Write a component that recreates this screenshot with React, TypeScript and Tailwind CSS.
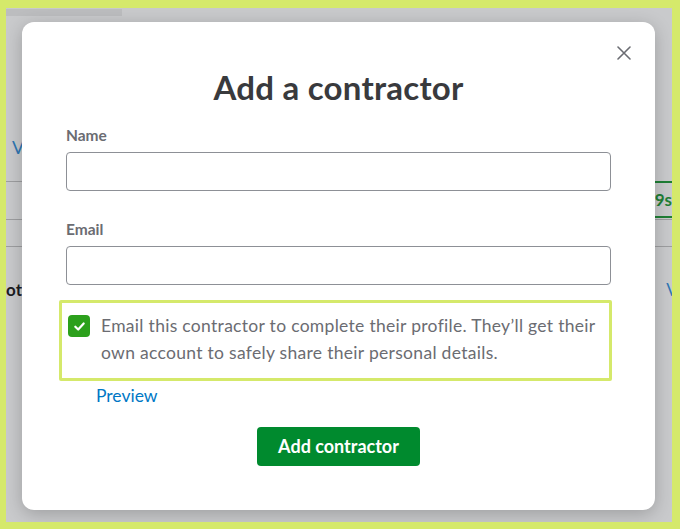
import { useState } from 'react'

export default function App() {
  const [notify, setNotify] = useState(true)

  return (
    <div className="w-[680px] h-[529px] bg-[#d5e96b] pt-[8px] pl-[6px] pr-[8px] pb-[7px] font-['Lato',sans-serif]">
      <div className="relative w-full h-full overflow-hidden bg-[#c9cacc]">
        {/* page behind the dialog */}
        <div className="flex flex-col">
          <div className="mt-[1px] h-[7px] w-[116px] bg-[#bcbdbf]" />
          <div className="h-[165px] flex items-end pb-[22px] pl-[6px]">
            <span className="text-[18px] leading-[24px] text-[#2f77b3]">View all</span>
          </div>
          <div className="h-[39px] border-y border-[#9d9ea0] flex justify-end">
            <div className="-mr-[30px] h-full w-[120px] border-y-2 border-[#1f7f36] -my-px flex items-center justify-end pr-[30px]">
              <span className="text-[17px] font-bold text-[#1f7f36]">1099s</span>
            </div>
          </div>
          <div className="h-[27px] border-b border-[#9d9ea0]" />
          <div className="h-[86px] flex items-center justify-between">
            <span className="-ml-[20px] text-[17px] font-bold text-[#1d1d1f]">Photography</span>
            <span className="mr-[-32px] text-[17px] text-[#2f77b3]">View</span>
          </div>
        </div>

        {/* dialog */}
        <div className="absolute left-[16px] top-[14px] w-[633px] h-[488px] bg-white rounded-[12px] shadow-[0_4px_18px_rgba(0,0,0,0.22)] px-[44px] pt-[46px]">
          <button type="button" aria-label="Close" className="absolute right-[24px] top-[24px] w-[14px] h-[14px] text-[#6b6c72]">
            <svg viewBox="0 0 14 14" width="14" height="14" fill="none" stroke="currentColor" strokeWidth="1.6" strokeLinecap="round">
              <path d="M1 1L13 13M13 1L1 13" />
            </svg>
          </button>

          <h1 className="text-center text-[33px] leading-[38px] tracking-[0.25px] font-bold text-[#393a3d]">Add a contractor</h1>

          <label className="block mt-[19px] text-[15.5px] leading-[20px] font-bold text-[#6b6c72]">Name</label>
          <input type="text" className="block mt-[7px] w-full h-[39px] rounded-[4px] border border-[#8d9096] outline-none px-3" />

          <label className="block mt-[28px] text-[15.5px] leading-[20px] font-bold text-[#6b6c72]">Email</label>
          <input type="email" className="block mt-[7px] w-full h-[39px] rounded-[4px] border border-[#8d9096] outline-none px-3" />

          <div className="mt-[15px] -ml-[7px] w-[553px] border-[3px] border-[#d5e96b] rounded-[2px] pl-[6px] pt-[9px] pb-[12px] flex items-start gap-[11px]">
            <button
              type="button"
              aria-label="Email this contractor"
              onClick={() => setNotify(!notify)}
              className={`mt-[3px] w-[22px] h-[22px] shrink-0 rounded-[4px] flex items-center justify-center ${notify ? 'bg-[#2ca01c]' : 'border-2 border-[#8d9096] bg-white'}`}
            >
              {notify && (
                <svg viewBox="0 0 14 14" width="13" height="13" fill="none" stroke="white" strokeWidth="2.4" strokeLinecap="round" strokeLinejoin="round">
                  <path d="M2.5 7.2L5.6 10.2L11.5 3.8" />
                </svg>
              )}
            </button>
            <p className="w-[505px] text-[17.5px] leading-[27px] tracking-[0.3px] text-[#6b6c72]">
              Email this contractor to complete their profile. They’ll get their own account to safely share their personal details.
            </p>
          </div>

          <a href="#" className="block mt-[3px] ml-[30px] w-fit text-[17.5px] leading-[24px] text-[#0077c5]">Preview</a>

          <div className="mt-[19px] flex justify-center">
            <button type="button" className="w-[163px] h-[39px] rounded-[4px] bg-[#008a2e] text-white text-[18px] font-bold">
              Add contractor
            </button>
          </div>
        </div>
      </div>
    </div>
  )
}
